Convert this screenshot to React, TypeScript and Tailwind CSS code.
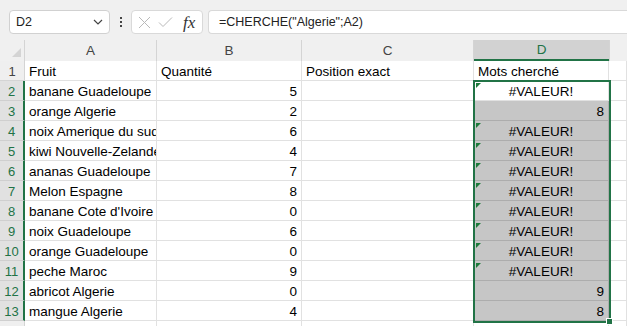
import React from 'react';

type Row = {
  a: string;
  b?: string;
  c?: string;
  d?: string;
  err?: boolean;
};

const rows: Row[] = [
  { a: 'Fruit', b: 'Quantité', c: 'Position exact', d: 'Mots cherché' },
  { a: 'banane Guadeloupe', b: '5', err: true },
  { a: 'orange Algerie', b: '2', d: '8' },
  { a: 'noix Amerique du sud', b: '6', err: true },
  { a: 'kiwi Nouvelle-Zelande', b: '4', err: true },
  { a: 'ananas Guadeloupe', b: '7', err: true },
  { a: 'Melon Espagne', b: '8', err: true },
  { a: "banane Cote d'Ivoire", b: '0', err: true },
  { a: 'noix Guadeloupe', b: '6', err: true },
  { a: 'orange Guadeloupe', b: '0', err: true },
  { a: 'peche Maroc', b: '9', err: true },
  { a: 'abricot Algerie', b: '0', d: '9' },
  { a: 'mangue Algerie', b: '4', d: '8' },
];

const cell = 'h-5 border-r border-b border-[#e1e1e1] overflow-hidden whitespace-nowrap pt-[3px] leading-[16px]';

const FormulaBar: React.FC = () => (
  <div className="h-10 bg-[#f0f0f0] flex items-start pt-[10px] pl-[9px] gap-0">
    <div className="w-[101px] h-6 bg-white border border-[#d1d1d1] rounded-[4px] flex items-center justify-between pl-[6px] pr-[6px] text-[12.5px] text-[#222]">
      <span>D2</span>
      <svg width="10" height="6" viewBox="0 0 10 6" fill="none">
        <polyline points="1,1 5,5 9,1" stroke="#444" strokeWidth="1.2" />
      </svg>
    </div>
    <div className="w-[21px] h-6 flex items-center justify-center">
      <div className="flex flex-col gap-[2px]">
        <span className="w-[2px] h-[2px] bg-[#444]" />
        <span className="w-[2px] h-[2px] bg-[#444]" />
        <span className="w-[2px] h-[2px] bg-[#444]" />
      </div>
    </div>
    <div className="w-[72px] h-6 bg-white border border-[#d9d9d9] rounded-[4px] flex items-center pl-[6px] gap-[7px]">
      <svg width="13" height="13" viewBox="0 0 13 13" fill="none">
        <path d="M1 1 L12 12 M12 1 L1 12" stroke="#b9b9b9" strokeWidth="1" />
      </svg>
      <svg width="15" height="12" viewBox="0 0 15 12" fill="none">
        <path d="M1 6.5 L5 10.5 L14 1.5" stroke="#b9b9b9" strokeWidth="1" />
      </svg>
      <span className="ml-[3px] text-[17px] leading-none italic text-[#333] font-['Liberation_Serif',serif]">fx</span>
    </div>
    <div className="ml-[5px] flex-1 h-6 bg-white border border-r-0 border-[#d9d9d9] rounded-l-[4px] flex items-center pl-[10px] text-[12.5px] text-[#222]">
      =CHERCHE("Algerie";A2)
    </div>
  </div>
);

export default function App() {
  return (
    <div className="w-[627px] h-[326px] overflow-hidden bg-white font-['Liberation_Sans',Arial,sans-serif] text-[13.5px] text-black">
      <div className="h-[3px] bg-white border-b border-[#d6d6d6]" />
      <div className="-mt-[3px]">
        <FormulaBar />
      </div>
      <div className="relative">
        <div className="grid grid-cols-[25px_132px_145px_172px_135px_1fr]">
          {/* header row */}
          <div className="h-[21px] bg-[#f0f0f0] border-r border-[#d4d4d4] relative">
            <svg className="absolute right-[3px] bottom-[4px]" width="9" height="9" viewBox="0 0 9 9">
              <polygon points="9,0 9,9 0,9" fill="#d4d4d4" />
            </svg>
          </div>
          {['A', 'B', 'C'].map((l) => (
            <div key={l} className="h-[21px] bg-[#f0f0f0] border-r border-[#d4d4d4] text-center text-[#444] text-[13.5px] pt-[2px] leading-[17px]">
              {l}
            </div>
          ))}
          <div className="h-[21px] bg-[#d2d2d2] border-b-2 border-[#217346] text-center text-[#217346] text-[13.5px] pt-[2px] leading-[15px]">
            D
          </div>
          <div className="h-[21px] bg-[#f0f0f0] border-l border-[#d4d4d4]" />

          {rows.map((r, i) => {
            const n = i + 1;
            const sel = n >= 2;
            const grey = n >= 3;
            return (
              <React.Fragment key={n}>
                <div
                  className={`h-5 border-b text-center text-[13px] pt-[3px] leading-[16px] ${
                    sel
                      ? 'bg-[#e1e1e1] text-[#217346] border-[#cfcfcf] border-r-2 border-r-[#217346]'
                      : 'bg-[#efefef] text-[#444] border-[#d4d4d4] border-r border-r-[#d4d4d4]'
                  }`}
                >
                  {n}
                </div>
                <div className={`${cell} pl-1`}>{r.a}</div>
                <div className={`${cell} ${n === 1 ? 'pl-1' : 'text-right pr-1'}`}>{r.b}</div>
                <div className={`${cell} pl-1`}>{r.c}</div>
                <div
                  className={`h-5 border-r border-b overflow-hidden whitespace-nowrap pt-[3px] leading-[16px] relative ${
                    grey ? 'bg-[#c6c6c6] border-[#adadad]' : 'border-[#e1e1e1]'
                  } ${n === 1 ? 'pl-1' : r.err ? 'text-center' : 'text-right pr-1'}`}
                >
                  {r.err && (
                    <svg className="absolute left-[2px] top-[2px]" width="5" height="5" viewBox="0 0 5 5">
                      <polygon points="0,0 5,0 0,5" fill="#1d7a3a" />
                    </svg>
                  )}
                  {r.err ? '#VALEUR!' : r.d}
                </div>
                <div className={cell} />
              </React.Fragment>
            );
          })}

          {/* partial row 14 */}
          <div className="h-5 bg-[#efefef] border-r border-[#d4d4d4]" />
          <div className={cell} />
          <div className={cell} />
          <div className={cell} />
          <div className={cell} />
          <div className={cell} />
        </div>

        {/* selection outline D2:D13 */}
        <div className="absolute left-[473px] top-[40px] w-[138px] h-[243px] border-2 border-[#217346] pointer-events-none" />
        <div className="absolute left-[606px] top-[278px] w-[7px] h-[7px] bg-[#217346] border border-white" />
      </div>
    </div>
  );
}
